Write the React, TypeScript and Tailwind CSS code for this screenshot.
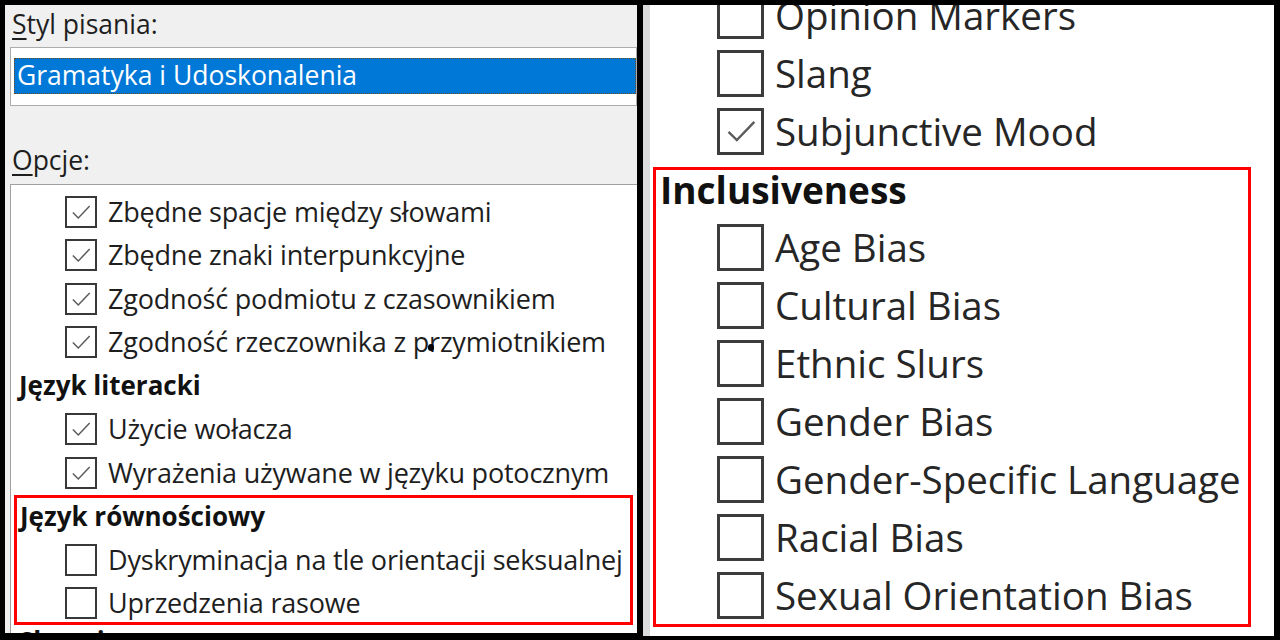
import React from 'react';

type Item = { label: string; checked?: boolean };

const font = { fontFamily: '"Open Sans", "Noto Sans", sans-serif' };

const Tick = ({ size }: { size: number }) => (
  <svg width={size} height={size} viewBox="0 0 24 24" fill="none">
    <path d="M4.5 12.5l5 5L20 6.5" stroke="#5c5c5c" strokeWidth={1.4} />
  </svg>
);

// small rows on the Polish dialog
const SmallRow = ({ label, checked, indent }: Item & { indent: string }) => (
  <div className={`flex h-[43.5px] shrink-0 items-center ${indent}`}>
    <span className="flex h-[32px] w-[32px] shrink-0 items-center justify-center border-2 border-[#383838] bg-white">
      {checked && <Tick size={26} />}
    </span>
    <span className="ml-[11px] whitespace-nowrap text-[27px] tracking-[-0.2px] leading-[34px] text-[#1e1e1e]">{label}</span>
  </div>
);

// large rows on the English dialog
const BigRow = ({ label, checked, indent }: Item & { indent: string }) => (
  <div className={`flex h-[58px] items-center ${indent}`}>
    <span className="flex h-[47px] w-[47px] shrink-0 items-center justify-center border-[3px] border-[#3c3c3c] bg-white">
      {checked && <Tick size={40} />}
    </span>
    <span className="ml-[11px] whitespace-nowrap text-[38.5px] leading-[46px] text-[#262626]">{label}</span>
  </div>
);

const grammar: Item[] = [
  { label: 'Zbędne spacje między słowami', checked: true },
  { label: 'Zbędne znaki interpunkcyjne', checked: true },
  { label: 'Zgodność podmiotu z czasownikiem', checked: true },
  { label: 'Zgodność rzeczownika z przymiotnikiem', checked: true },
];

const literary: Item[] = [
  { label: 'Użycie wołacza', checked: true },
  { label: 'Wyrażenia używane w języku potocznym', checked: true },
];

const equality: Item[] = [
  { label: 'Dyskryminacja na tle orientacji seksualnej' },
  { label: 'Uprzedzenia rasowe' },
];

const style: Item[] = [
  { label: 'Opinion Markers' },
  { label: 'Slang' },
  { label: 'Subjunctive Mood', checked: true },
];

const inclusive: Item[] = [
  { label: 'Age Bias' },
  { label: 'Cultural Bias' },
  { label: 'Ethnic Slurs' },
  { label: 'Gender Bias' },
  { label: 'Gender-Specific Language' },
  { label: 'Racial Bias' },
  { label: 'Sexual Orientation Bias' },
];

const PolishPanel = () => (
  <div className="flex h-[628px] w-[632px] shrink-0 flex-col overflow-hidden bg-[#f0f0f0]">
    <div className="shrink-0 pl-[7px] pt-[1px] text-[26.5px] leading-[36px] text-[#1e1e1e]">
      <span className="underline underline-offset-[4px]">S</span>tyl pisania:
    </div>
    <div className="ml-[5px] mt-[5px] h-[59px] shrink-0 border border-[#acacac] bg-white pl-[3px] pt-[10px]">
      <div className="h-[36px] border border-dotted border-[#6b4a1a] bg-[#0078d7] pl-[2px] text-[26.5px] leading-[33px] text-white">
        Gramatyka i Udoskonalenia
      </div>
    </div>
    <div className="mt-[36px] shrink-0 pl-[7px] text-[26.5px] leading-[36px] text-[#1e1e1e]">
      <span className="underline underline-offset-[4px]">O</span>pcje:
    </div>
    <div className="relative ml-[5px] mt-[6px] flex-1 border-l border-t border-[#a0a0a0] bg-white pt-[5px]">
      {grammar.map((it) => (
        <SmallRow key={it.label} {...it} indent="pl-[54px]" />
      ))}
      <div className="flex h-[43.5px] items-center pl-[8px] text-[26px] font-bold text-[#111]">Język literacki</div>
      {literary.map((it) => (
        <SmallRow key={it.label} {...it} indent="pl-[54px]" />
      ))}
      <div className="ml-[3px] mr-[4px] outline-[3px] -outline-offset-[3px] outline-[#ff0000]">
        <div className="flex h-[43.5px] items-center pl-[6px] text-[26px] font-bold text-[#111]">Język równościowy</div>
        {equality.map((it) => (
          <SmallRow key={it.label} {...it} indent="pl-[51px]" />
        ))}
      </div>
      <div className="-mt-[5px] flex h-[43.5px] items-center pl-[8px] text-[26px] font-bold text-[#111]">Słownictwo</div>
      {/* mouse pointer left in the screenshot */}
      <span className="absolute left-[417px] top-[159px] h-[7px] w-[6px] rounded-full bg-black" />
    </div>
  </div>
);

const EnglishPanel = () => (
  <div className="h-[631px] w-[631px] shrink-0 overflow-hidden border-l-[7px] border-[#dcdcdc] bg-white">
    <div className="-mt-[19px]">
      {style.map((it) => (
        <BigRow key={it.label} {...it} indent="pl-[67px]" />
      ))}
    </div>
    <div className="ml-[3px] mt-[7px] w-[598px] pb-[3px] outline-[3px] -outline-offset-[3px] outline-[#ff0000]">
      <div className="h-[51px] pl-[7px] text-[37px] font-bold leading-[46px] text-[#111]">Inclusiveness</div>
      {inclusive.map((it) => (
        <BigRow key={it.label} {...it} indent="pl-[64px]" />
      ))}
    </div>
  </div>
);

export default function App() {
  return (
    <div className="flex h-[640px] w-[1280px] overflow-hidden bg-black pl-[5px] pt-[5px]" style={font}>
      <PolishPanel />
      <div className="w-[6px] shrink-0" />
      <EnglishPanel />
    </div>
  );
}
